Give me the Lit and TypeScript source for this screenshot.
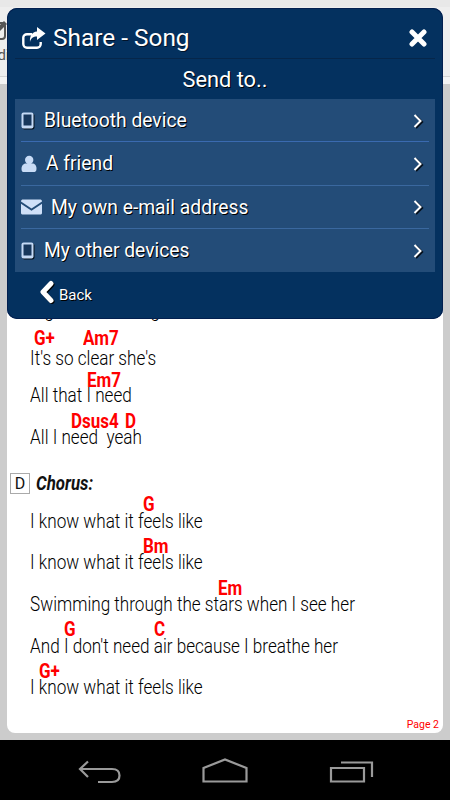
import { LitElement, html, css, svg } from "lit";
import { customElement } from "lit/decorators.js";

const tablet = html`<svg class="ic" width="14" height="18" viewBox="0 0 14 18"><rect x="1.5" y="1.500" width="12" height="16" rx="2" fill="#04101d"/><rect x="0.5" y="0.500" width="12" height="16" rx="2" fill="#c4d9f5"/><rect x="2.500" y="2.500" width="8" height="11" fill="#17375c"/></svg>`;
const person = html`<svg class="ic" width="16" height="18" viewBox="0 0 16 18"><circle cx="8.2" cy="5" r="4.2" fill="#c9dcf6"/><path d="M0.5 14c0-4 2.5-5.5 4.5-5.5h6.500c2 0 4 1.500 4 5.500 0 2.500-1.500 3-3 3H3c-1.500 0-2.500-.5-2.500-3z" fill="#c9dcf6"/></svg>`;
const mail = html`<svg class="ic" width="21" height="16" viewBox="0 0 21 16"><path d="M0 2.500C0 1 1 .5 2 .5h17c1 0 2 .5 2 2L10.500 9.500z" fill="#cfe0f8"/><path d="M0 4.800l10.500 7 10.500-7V14c0 1-1 1.500-2 1.500H2c-1 0-2-.5-2-1.500z" fill="#cfe0f8"/></svg>`;
const chevron = html`<svg class="chev" width="12" height="16" viewBox="0 0 12 16"><path d="M3 2l6 6-6 6" fill="none" stroke="#05101c" stroke-width="2.200" transform="translate(1 1)"/><path d="M2.500 2l6 6-6 6" fill="none" stroke="#fff" stroke-width="2"/></svg>`;

type Line = { chords: [number, string][]; text: string; h: number; d: number };
const lines: Line[] = [
  { chords: [], text: "Big time with ring", h: 42, d: 16 },
  { chords: [[34, "G+"], [83, "Am7"]], text: "It's so clear she's", h: 48, d: 20 },
  { chords: [[87, "Em7"]], text: "All that I need", h: 37, d: 15 },
  { chords: [[71, "Dsus4"], [125, "D"]], text: "All I need  yeah", h: 42, d: 16 },
];
const chorus: Line[] = [
  { chords: [[143, "G"]], text: "I know what it feels like", h: 37, d: 17 },
  { chords: [[143, "Bm"]], text: "I know what it feels like", h: 41, d: 16 },
  { chords: [[218, "Em"]], text: "Swimming through the stars when I see her", h: 42, d: 16 },
  { chords: [[64, "G"], [154, "C"]], text: "And I don't need air because I breathe her", h: 42, d: 17 },
  { chords: [[39, "G+"]], text: "I know what it feels like", h: 41, d: 16 },
];

@customElement("app-root")
export class AppRoot extends LitElement {
  static styles = css`
    :host { display: block; width: 450px; height: 800px; position: relative; overflow: hidden; background: #ccc; font-family: Roboto, "Liberation Sans", sans-serif; }
    .screen { display: flex; flex-direction: column; height: 800px; }
    .toolbar { height: 76px; background: #eee; border-top: 7px solid #e8e8e8; box-sizing: border-box; flex: none; overflow: hidden; display: flex; flex-direction: column; align-items: flex-start; padding-top: 13px; }
    .tool-ic { margin-left: -12px; }
    .tool-label { margin: 6px 0 0 -11px; color: #555; font-size: 15px; line-height: 18px; }
    .strip { height: 8px; flex: none; background: #f4f4f4; border-top: 1px solid #d4d4d4; box-sizing: border-box; }
    .stage { flex: 1; padding: 0 7px 7px; display: flex; min-height: 0; }
    .sheet { flex: 1; background: #fff; border-radius: 0 0 8px 8px; padding-top: 196px; position: relative; box-sizing: border-box; }
    .line { display: flex; flex-direction: column; justify-content: flex-end; position: relative; }
    .chords { position: absolute; left: 0; height: 18px; width: 100%; }
    .chord { position: absolute; top: 0; color: #f00; font-weight: 700; font-size: 20px; line-height: 18px; transform: scaleX(.85); transform-origin: left; white-space: pre; }
    .lyric { padding-left: 27px; font-size: 20px; font-weight: 300; line-height: 24px; color: #000; white-space: pre; transform: scaleX(.856); transform-origin: left; }
    .head { display: flex; align-items: center; gap: 6px; margin: 21px 0 0 3px; height: 26px; }
    .key { width: 20px; height: 21px; border: 1px solid #aaa; box-sizing: border-box; display: flex; align-items: center; justify-content: center; font-size: 16px; color: #111; }
    .label { font-size: 20px; font-weight: 700; font-style: italic; color: #111; transform: scaleX(.84); transform-origin: left; }
    .page { position: absolute; right: 4px; bottom: 1px; color: #f00; font-size: 10.500px; line-height: 14px; }
    .nav { height: 60px; background: #000; flex: none; display: flex; }
    .modal { position: absolute; left: 7px; top: 8px; width: 436px; height: 311px; box-sizing: border-box; background: #04315f; border-radius: 10px; padding: 0 8px; box-shadow: inset 0 0 0 1px #021f4f; color: #fff; display: flex; flex-direction: column; }
    .title { height: 51px; display: flex; align-items: center; gap: 7px; border-bottom: 1px solid #06264a; padding: 9px 8px 0 7px; font-size: 24.400px; text-shadow: 1px 1px 0 #02142a; flex: none; box-sizing: border-box; }
    .title span { flex: 1; }
    .send { height: 40px; display: flex; align-items: center; justify-content: center; font-size: 21.800px; text-shadow: 1px 1px 0 #000; flex: none; }
    .list { background: #234c78; padding: 0 6px; flex: none; }
    .row { height: 43.250px; display: flex; align-items: center; gap: 9px; padding-top: 1px; font-size: 19.300px; text-shadow: 1px 1px 0 #000; border-bottom: 1px solid #3a6ab0; box-sizing: border-box; }
    .row:nth-child(n+2) { border-bottom-color: #3a689f; }
    .row:last-child { border-bottom: 0; }
    .row span { flex: 1; white-space: nowrap; }
    .ic { flex: none; }
    .chev { flex: none; margin-right: 5px; }
    .back { display: flex; align-items: flex-start; gap: 4px; padding: 8px 0 0 23px; font-size: 15px; text-shadow: 1px 1px 0 #000; }
    .back span { margin-top: 6px; }
  `;

  private renderLine(l: Line) {
    return html`<div class="line" style="height:${l.h}px"><div class="chords" style="bottom:${3 + l.d}px">${l.chords.map(([x, c]) => html`<span class="chord" style="left:${x - 7}px">${c}</span>`)}</div><div class="lyric">${l.text}</div></div>`;
  }

  render() {
    return html`
      <div class="screen">
        <div class="toolbar">
          <svg class="tool-ic" width="20" height="20" viewBox="0 0 20 20"><rect x="1" y="3" width="16" height="16" rx="3" fill="none" stroke="#555" stroke-width="2"/><path d="M7 13l1-4 8-8 3 3-8 8z" fill="#555"/></svg>
          <span class="tool-label">Edi</span>
        </div>
        <div class="strip"></div>
        <div class="stage">
          <div class="sheet">
            ${lines.map((l) => this.renderLine(l))}
            <div class="head"><span class="key">D</span><span class="label">Chorus:</span></div>
            ${chorus.map((l) => this.renderLine(l))}
            <div class="page">Page 2</div>
          </div>
        </div>
        <div class="nav">
          <svg width="450" height="60" viewBox="0 0 450 60">
            ${svg`<g fill="none" stroke="#9a9a9a" stroke-width="2.200">
              <path d="M81 29h31c4.500 0 7.500 2 7.500 6.500s-3 6.500-7.500 6.500H98"/>
              <path d="M88 21.500l-8 7.500 8 8"/>
              <path d="M203.500 41.500V28L225 19.500 246.500 28v13.500z"/>
              <path d="M331 41.500V28h33v13.500z"/>
              <path d="M341 22.500h31V37"/>
            </g>`}
          </svg>
        </div>
      </div>
      <div class="modal">
        <div class="title">
          <svg width="24" height="22" viewBox="0 0 24 22"><path d="M10 7.200H5C3 7.200 1.300 8.500 1.300 10.500v6.500c0 2 1.700 3.700 3.700 3.700h10c2 0 3.700-1.700 3.700-3.700V15" fill="none" stroke="#fff" stroke-width="2.400"/><path d="M15 0l8.500 6.500L15 13V9.500c-4 0-6 1.500-7 5.500-.5-6 2-10 7-10.500z" fill="#fff"/></svg>
          <span>Share - Song</span>
          <svg width="18" height="18" viewBox="0 0 18 18"><path d="M3 3l12 12M15 3L3 15" stroke="#fff" stroke-width="5" stroke-linecap="round"/></svg>
        </div>
        <div class="send">Send to..</div>
        <div class="list">
          <div class="row">${tablet}<span>Bluetooth device</span>${chevron}</div>
          <div class="row">${person}<span>A friend</span>${chevron}</div>
          <div class="row">${mail}<span>My own e-mail address</span>${chevron}</div>
          <div class="row">${tablet}<span>My other devices</span>${chevron}</div>
        </div>
        <div class="back">
          <svg width="17" height="24" viewBox="0 0 17 24"><path d="M13 3.500L5 12l8 8.500" fill="none" stroke="#000" stroke-width="5" stroke-linecap="round" stroke-linejoin="round" transform="translate(1 1)"/><path d="M13 3.500L5 12l8 8.500" fill="none" stroke="#fff" stroke-width="5" stroke-linecap="round" stroke-linejoin="round"/></svg>
          <span>Back</span>
        </div>
      </div>
    `;
  }
}
